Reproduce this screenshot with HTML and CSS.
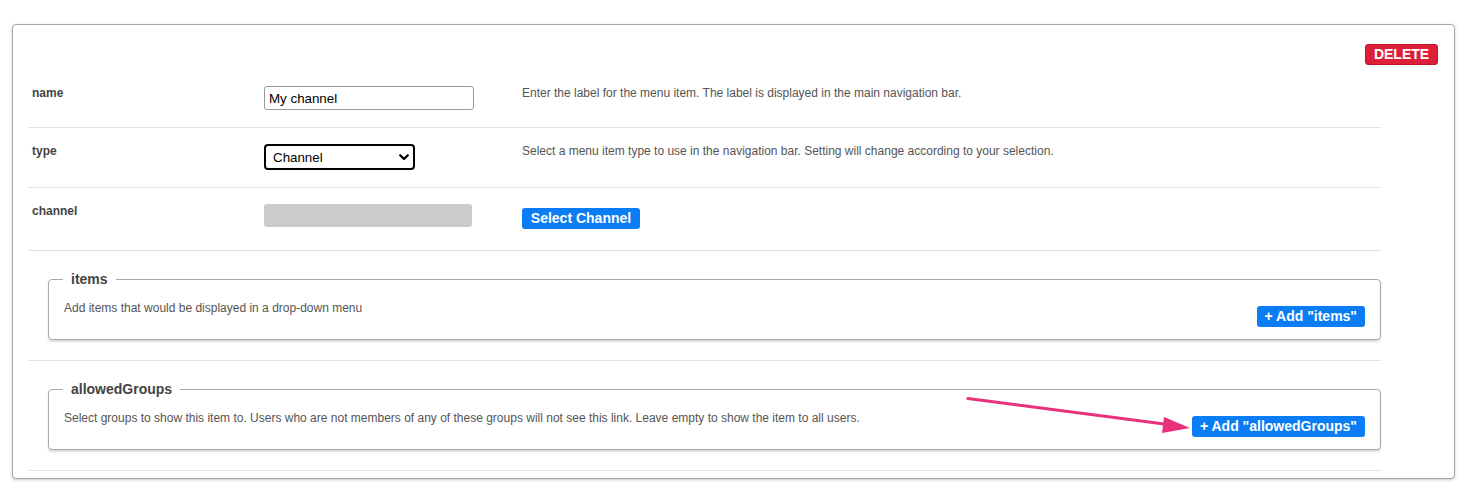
FILE: index.html
```html
<!DOCTYPE html>
<html lang="en">
<head>
<meta charset="utf-8">
<title>Menu item</title>
<link rel="stylesheet" href="styles.css">
</head>
<body>
<div class="page">
  <div class="card">
    <div class="card-head">
      <button class="btn btn-danger">DELETE</button>
    </div>
    <div class="rows">
      <div class="row">
        <div class="label">name</div>
        <div class="control"><input class="text-input" type="text" value="My channel"></div>
        <div class="desc">Enter the label for the menu item. The label is displayed in the main navigation bar.</div>
      </div>
      <div class="row">
        <div class="label">type</div>
        <div class="control">
          <div class="select-wrap">
            <select class="select"><option>Channel</option></select>
            <svg class="chevron" width="10" height="7" viewBox="0 0 10 7"><path d="M1.2 1.2 L5 5 L8.8 1.2" fill="none" stroke="#000" stroke-width="2.2" stroke-linecap="round" stroke-linejoin="round"/></svg>
          </div>
        </div>
        <div class="desc">Select a menu item type to use in the navigation bar. Setting will change according to your selection.</div>
      </div>
      <div class="row row-channel">
        <div class="label">channel</div>
        <div class="control"><div class="placeholder-box"></div></div>
        <div class="desc"><button class="btn btn-primary btn-select">Select Channel</button></div>
      </div>
      <div class="row row-group">
        <fieldset class="group">
          <legend>items</legend>
          <div class="group-body">
            <div class="group-text">Add items that would be displayed in a drop-down menu</div>
            <button class="btn btn-primary btn-add">+ Add "items"</button>
          </div>
        </fieldset>
      </div>
      <div class="row row-group">
        <fieldset class="group">
          <legend>allowedGroups</legend>
          <div class="group-body">
            <div class="group-text">Select groups to show this item to. Users who are not members of any of these groups will not see this link. Leave empty to show the item to all users.</div>
            <button class="btn btn-primary btn-add">+ Add "allowedGroups"</button>
          </div>
        </fieldset>
      </div>
    </div>
  </div>
  <svg class="arrow" width="1469" height="491" viewBox="0 0 1469 491">
    <line x1="968" y1="398.5" x2="1168" y2="424.5" stroke="#e8317a" stroke-width="3.2" stroke-linecap="round"/>
    <path d="M1190 428 L1164 417 L1162 433 Z" fill="#e8317a"/>
  </svg>
</div>
</body>
</html>
```

FILE: styles.css
```css
* { box-sizing: border-box; }

html, body {
  margin: 0;
  padding: 0;
  background: #fff;
}

body {
  font-family: Arial, "Liberation Sans", Helvetica, sans-serif;
  color: #555;
}

.page {
  position: relative;
  padding: 24px 14px 0 12px;
  width: 1469px;
  height: 491px;
}

.card {
  border: 1px solid #a8a8a8;
  border-radius: 4px;
  box-shadow: 0 1px 3px rgba(0, 0, 0, 0.22);
  padding: 19px 16px 7px 15px;
  background: #fff;
}

.card-head {
  display: flex;
  justify-content: flex-end;
  height: 26px;
}

.rows {
  margin-right: 57px;
}

.row {
  display: grid;
  grid-template-columns: 232px 258px 1fr;
  padding: 16px 0 17px 4px;
  border-bottom: 1px solid #e0e0e0;
}

.row-channel {
  padding-bottom: 21px;
}

.row-group {
  display: block;
  padding: 20px 0 20px 20px;
}

.label {
  font-size: 12px;
  font-weight: bold;
  color: #444;
  line-height: 14px;
}

.desc {
  font-size: 12px;
  line-height: 14px;
  color: #555;
}

.text-input {
  display: block;
  width: 210px;
  height: 24px;
  margin: 0;
  padding: 1px 4px;
  border: 1px solid #999;
  border-radius: 3px;
  font-family: Arial, "Liberation Sans", sans-serif;
  font-size: 13.333px;
  color: #000;
  background: #fff;
}

.select-wrap {
  position: relative;
  width: 151px;
  height: 26px;
}

.select {
  appearance: none;
  -webkit-appearance: none;
  display: block;
  width: 151px;
  height: 26px;
  margin: 0;
  padding: 0 20px 0 7px;
  border: 2px solid #000;
  border-radius: 4px;
  background: #fff;
  font-family: Arial, "Liberation Sans", sans-serif;
  font-size: 13.333px;
  color: #000;
}

.chevron {
  position: absolute;
  right: 6px;
  top: 10px;
  pointer-events: none;
}

.placeholder-box {
  width: 208px;
  height: 23px;
  background: #cbcbcb;
  border-radius: 3px;
}

.btn {
  display: inline-block;
  height: 21px;
  margin: 0;
  padding: 0 8px;
  border: none;
  border-radius: 3px;
  font-family: Arial, "Liberation Sans", sans-serif;
  font-size: 14px;
  font-weight: bold;
  line-height: 21px;
  color: #fff;
  cursor: pointer;
  white-space: nowrap;
}

.btn-primary {
  background: #0a7cf4;
}

.btn-danger {
  background: #dd1f37;
  border: 1px solid #c3152c;
  line-height: 19px;
  width: 73px;
  padding: 0;
  text-align: center;
}

.btn-select {
  margin-top: 4px;
  width: 118px;
  padding: 0;
  text-align: center;
}

.group {
  margin: 0;
  padding: 14px 15px 12px 15px;
  border: 1px solid #a8a8a8;
  border-radius: 4px;
  box-shadow: 0 2px 2px rgba(0, 0, 0, 0.14);
  min-width: 0;
}

.group legend {
  padding: 0 8px;
  margin-left: -1px;
  font-size: 14px;
  font-weight: bold;
  line-height: 16px;
  color: #444;
}

.group-body {
  display: flex;
  justify-content: space-between;
  align-items: flex-start;
  gap: 20px;
}

.group-text {
  font-size: 12px;
  line-height: 14px;
  color: #555;
}

.btn-add {
  margin-top: 5px;
}

.arrow {
  position: absolute;
  left: 0;
  top: 0;
  pointer-events: none;
}
```
